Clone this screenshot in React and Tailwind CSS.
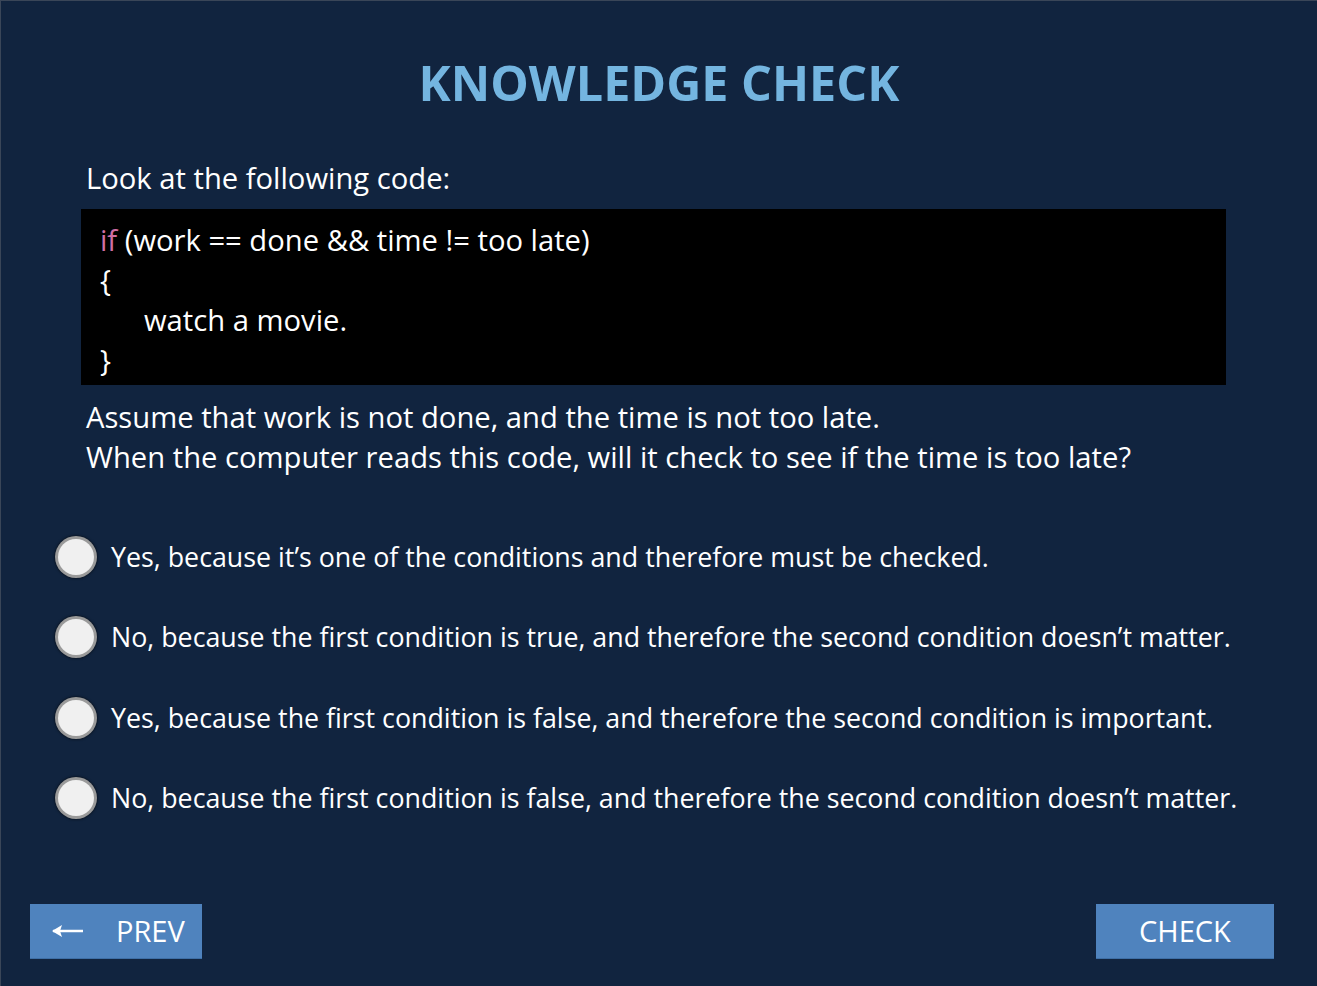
import React, { useState } from "react";

const options = [
  "Yes, because it\u2019s one of the conditions and therefore must be checked.",
  "No, because the first condition is true, and therefore the second condition doesn\u2019t matter.",
  "Yes, because the first condition is false, and therefore the second condition is important.",
  "No, because the first condition is false, and therefore the second condition doesn\u2019t matter.",
];

const Radio = ({ checked }) => (
  <span className="w-[42px] h-[42px] rounded-full bg-[#9a9a9a] shadow-[0_0_3px_rgba(0,0,0,0.8)] flex items-center justify-center shrink-0">
    <span className="w-[36px] h-[36px] rounded-full bg-[#f0f0f0] flex items-center justify-center">
      {checked && <span className="w-[16px] h-[16px] rounded-full bg-[#4f83be]" />}
    </span>
  </span>
);

export default function App() {
  const [selected, setSelected] = useState(null);

  return (
    <div
      className="w-[1317px] h-[986px] bg-[#11243f] text-white flex flex-col border-t border-l border-[#3a4658]"
      style={{ fontFamily: '"Open Sans", "Noto Sans", sans-serif' }}
    >
      <h1 className="text-center text-[48.5px] font-bold text-[#74b5e0] leading-none mt-[57px]">
        KNOWLEDGE CHECK
      </h1>

      <div className="pl-[80px] pr-[91px] mt-[52px]">
        <p className="text-[29.2px] leading-[40px] pl-[5px] -mt-[1px]">Look at the following code:</p>
        <div className="bg-black mt-[11px] pl-[19px] pt-[11px] pb-[5px] text-[29.2px] leading-[40px]">
          <div>
            <span className="text-[#d06fa4]">if</span> (work == done &amp;&amp; time != too late)
          </div>
          <div>{"{"}</div>
          <div className="pl-[44px]">watch a movie.</div>
          <div>{"}"}</div>
        </div>
        <p className="text-[29.2px] leading-[40px] pl-[5px] mt-[12px]">
          Assume that work is not done, and the time is not too late.
          <br />
          When the computer reads this code, will it check to see if the time is too late?
        </p>
      </div>

      <div className="flex flex-col gap-[38.5px] mt-[59px] pl-[54px]">
        {options.map((opt, i) => (
          <button
            key={i}
            onClick={() => setSelected(i)}
            className="flex items-center gap-[14px] text-left text-[26.8px] leading-[42px]"
          >
            <Radio checked={selected === i} />
            <span>{opt}</span>
          </button>
        ))}
      </div>

      <div className="mt-auto mb-[27px] px-[29px] flex justify-between items-center">
        <button className="w-[172px] h-[55px] bg-[#4f83be] border-b border-[#3e6fa6] flex items-center text-[29px]">
          <svg width="34" height="16" viewBox="0 0 34 16" className="ml-[21px]">
            <path d="M2 8 H32" stroke="white" strokeWidth="2.5" />
            <path d="M1 8 L11 2 L9 8 L11 14 Z" fill="white" />
          </svg>
          <span className="ml-[31px]">PREV</span>
        </button>
        <button className="w-[178px] h-[55px] bg-[#4f83be] border-b border-[#3e6fa6] text-[29px] mr-[14px]">
          CHECK
        </button>
      </div>
    </div>
  );
}
